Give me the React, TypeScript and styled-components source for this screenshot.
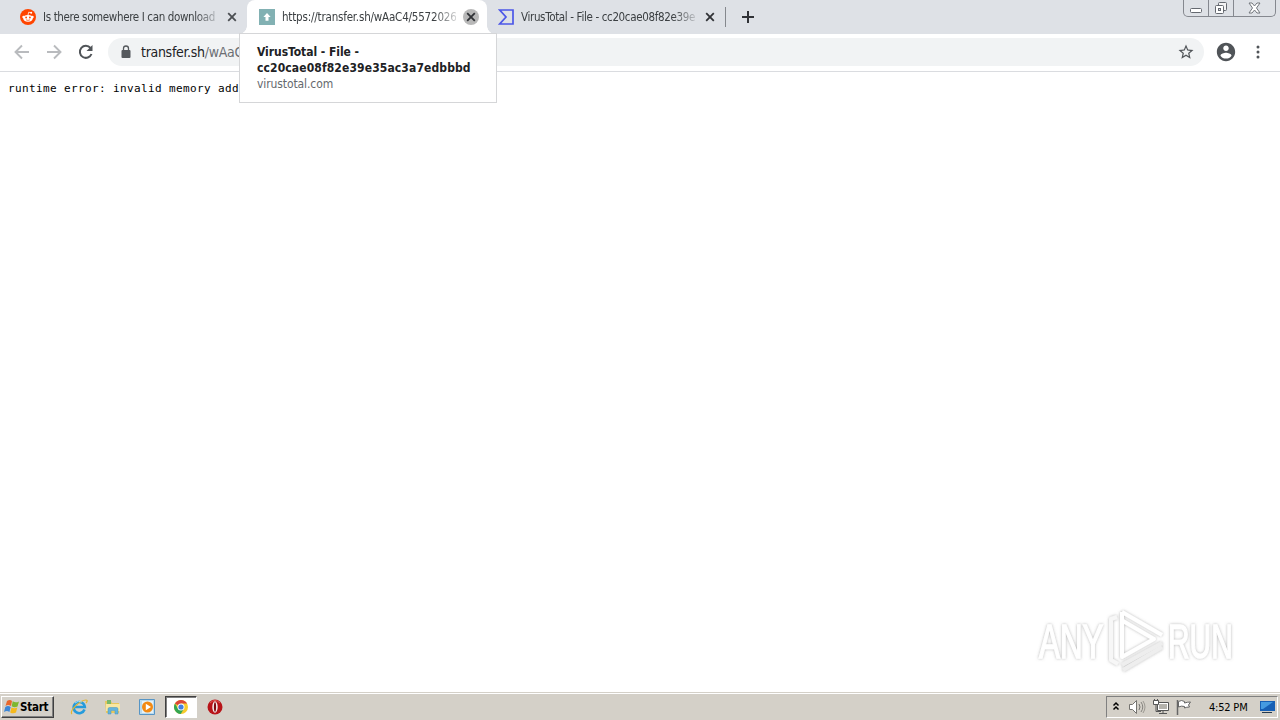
import React from 'react';
import styled, { createGlobalStyle } from 'styled-components';

const GlobalStyle = createGlobalStyle`
  * {
    box-sizing: border-box;
  }

  body {
    margin: 0;
    overflow: hidden;
    background: #fff;
    font-family: "DejaVu Sans Condensed", "DejaVu Sans", sans-serif;
    font-stretch: condensed;
  }

  svg {
    display: block;
    flex: none;
  }
`;

interface LabelProps {
  $spacing?: number;
}

const Desktop = styled.div`
  display: flex;
  flex-direction: column;
  width: 1280px;
  height: 720px;
  position: relative;
`;

// Tab strip
const TabStrip = styled.div`
  display: flex;
  height: 34px;
  flex: none;
  background: #dee1e6;
  padding-left: 8px;
`;

const Tab = styled.div<{ $active?: boolean; $width: number; $inset?: number }>`
  display: flex;
  align-items: center;
  position: relative;
  width: ${props => props.$width}px;
  height: 34px;
  padding-left: ${props => props.$inset || 12}px;
  border-radius: 8px 8px 0 0;
  background: ${props => (props.$active ? '#fff' : 'transparent')};

  /* the active tab flares out where it meets the toolbar */
  &::before,
  &::after {
    content: "";
    display: ${props => (props.$active ? 'block' : 'none')};
    position: absolute;
    bottom: 0;
    width: 8px;
    height: 8px;
  }

  &::before {
    left: -8px;
    background: radial-gradient(circle at 0 0, transparent 7.5px, #fff 8px);
  }

  &::after {
    right: -8px;
    background: radial-gradient(circle at 100% 0, transparent 7.5px, #fff 8px);
  }
`;

const TabTitle = styled.span<LabelProps>`
  width: 174px;
  margin-left: 7px;
  overflow: hidden;
  white-space: nowrap;
  font-size: 11.5px;
  letter-spacing: ${props => props.$spacing || 0}px;
  line-height: 16px;
  color: #3c4043;
  mask-image: linear-gradient(to right, #000 152px, transparent 180px);
`;

const TabClose = styled.div<{ $hovered?: boolean }>`
  display: flex;
  align-items: center;
  justify-content: center;
  width: 16px;
  height: 16px;
  margin-left: 7px;
  border-radius: 50%;
  background: ${props => (props.$hovered ? '#b8b8b8' : 'transparent')};
`;

const NewTab = styled.div`
  display: flex;
  align-items: center;
  height: 20px;
  margin-top: 7px;
  padding-left: 15px;
  border-left: 1px solid #85888d;
`;

const WindowButtons = styled.div`
  display: flex;
  width: 93px;
  height: 17px;
  margin-left: auto;
  margin-right: 4px;
  border: 1px solid #85888f;
  border-top: 0;
  border-radius: 0 0 5px 5px;
`;

const WindowButton = styled.div<{ $width: number }>`
  display: flex;
  align-items: center;
  justify-content: center;
  width: ${props => props.$width}px;
  height: 16px;

  & + & {
    border-left: 1px solid #85888f;
  }
`;

// Toolbar
const Toolbar = styled.div`
  display: flex;
  align-items: center;
  height: 38px;
  flex: none;
  padding: 0 13px 1px 13px;
  border-bottom: 1px solid #dadce0;
  background: #fff;
`;

const NavIcon = styled.div`
  display: flex;
  width: 32px;
`;

const Omnibox = styled.div`
  display: flex;
  align-items: center;
  width: 1096px;
  height: 28px;
  margin-left: -1px;
  padding: 0 9px 0 12px;
  border-radius: 14px;
  background: #f1f3f4;
`;

const Address = styled.span`
  flex: 1;
  margin-left: 9px;
  font-size: 14px;
  letter-spacing: -0.3px;
  color: #202124;
`;

const AddressPath = styled.span`
  color: #6b6f73;
`;

const ProfileButton = styled.div`
  margin-left: 11px;
`;

const MenuButton = styled.div`
  margin-left: 12px;
`;

// Page
const Page = styled.main`
  flex: 1;
  padding: 9px 8px 8px;
  overflow: hidden;
`;

const ErrorText = styled.pre`
  margin: 0;
  width: 232px;
  font-family: "DejaVu Sans Mono", "Liberation Mono", monospace;
  font-size: 11px;
  letter-spacing: 0.378px;
  line-height: 16px;
  color: #000;
`;

const HoverCard = styled.div`
  position: absolute;
  top: 33px;
  left: 239px;
  width: 258px;
  height: 70px;
  padding: 10px 0 0 17px;
  border: 1px solid #d5d6d8;
  background: #fff;
  line-height: 16px;
  white-space: nowrap;
`;

const CardTitle = styled.div<LabelProps>`
  font-size: 12px;
  font-weight: bold;
  letter-spacing: ${props => props.$spacing || 0}px;
  color: #202124;
`;

const CardDomain = styled.div`
  font-size: 12px;
  letter-spacing: -0.1px;
  color: #65696d;
`;

const Watermark = styled.svg`
  position: absolute;
  left: 1020px;
  top: 595px;
`;

// Taskbar
const Taskbar = styled.footer`
  display: flex;
  align-items: center;
  height: 28px;
  flex: none;
  padding: 1px 2px 0 1px;
  border-top: 1px solid #d4d0c8;
  box-shadow: inset 0 1px #fff;
  background: #d4d0c8;
`;

const StartButton = styled.div`
  display: flex;
  align-items: center;
  width: 53px;
  height: 22px;
  padding-left: 2px;
  border: 1px solid;
  border-color: #fff #404040 #404040 #fff;
  box-shadow: inset -1px -1px #808080;
  font-size: 11.5px;
  font-weight: bold;
  letter-spacing: -0.25px;
  color: #000;
`;

const QuickLaunch = styled.div`
  display: flex;
  align-items: center;
  margin-left: 8px;
`;

const TaskItem = styled.div<{ $active?: boolean }>`
  display: flex;
  align-items: center;
  justify-content: center;
  width: 34px;
  height: 22px;

  ${props =>
    props.$active &&
    `
    width: 32px;
    margin: 0 1px 0 1px;
    background: #fff;
    border: 1px solid;
    border-color: #404040 #fff #fff #404040;
    box-shadow: inset 1px 1px #808080;
  `}
`;

const Tray = styled.div`
  display: flex;
  align-items: center;
  width: 172px;
  height: 22px;
  margin-left: auto;
  padding-left: 5px;
  border: 1px solid;
  border-color: #808080 #fff #fff #808080;
`;

const TrayIcon = styled.div<{ $gap: number }>`
  margin-left: ${props => props.$gap}px;
`;

const Clock = styled.span`
  width: 43px;
  margin-left: 16px;
  white-space: nowrap;
  font-size: 11px;
  letter-spacing: -0.2px;
  color: #000;
`;

const CloseIcon = ({ dark }: { dark?: boolean }) => (
  <svg width="10" height="10" viewBox="0 0 10 10">
    <path d="M1.2 1.2l7.6 7.6M8.8 1.2L1.2 8.8" stroke={dark ? '#303236' : '#4b4e52'} strokeWidth="1.8" />
  </svg>
);

const RedditIcon = () => (
  <svg width="16" height="16" viewBox="0 0 16 16">
    <circle cx="8" cy="8" r="8" fill="#ff4500" />
    <path d="M8 6l.7-2.8 2.3.5" fill="none" stroke="#fff" strokeWidth=".8" />
    <circle cx="11.2" cy="3.8" r="1" fill="#fff" />
    <circle cx="3.5" cy="8" r="1.2" fill="#fff" />
    <circle cx="12.5" cy="8" r="1.2" fill="#fff" />
    <ellipse cx="8" cy="9.3" rx="4.7" ry="3.4" fill="#fff" />
    <circle cx="6.1" cy="8.5" r=".9" fill="#ff4500" />
    <circle cx="9.9" cy="8.5" r=".9" fill="#ff4500" />
    <path d="M6 10.8q2 1.2 4 0" fill="none" stroke="#ff4500" strokeWidth=".7" />
  </svg>
);

const TransferIcon = () => (
  <svg width="16" height="16" viewBox="0 0 16 16">
    <path d="M0 0h16v16H0z" fill="#82b1b3" />
    <path d="M8 4l3.6 4H9.5v3.8h-3V8H4.4z" fill="#fff" />
  </svg>
);

const VirusTotalIcon = () => (
  <svg width="16" height="16" viewBox="0 0 16 16">
    <path d="M1.7 1H15v14H1.7L8 8z" fill="none" stroke="#4c57e8" strokeWidth="1.7" />
  </svg>
);

const ChromeIcon = () => (
  <svg width="16" height="16" viewBox="0 0 16 16">
    <circle cx="8" cy="8" r="7" fill="#f7cb2d" />
    <path d="M8 8L1.94 4.5A7 7 0 0 1 14.06 4.5H8z" fill="#dc4638" />
    <path d="M1.94 4.5A7 7 0 0 0 7.7 15L11 9.7 8 8 5 9.7z" fill="#33a652" />
    <circle cx="8" cy="8" r="3.5" fill="#fff" />
    <circle cx="8" cy="8" r="2.6" fill="#427fe1" />
  </svg>
);

const Logo = () => (
  <Watermark width="230" height="90" viewBox="0 0 230 90">
    <defs>
      <linearGradient id="letters" gradientUnits="userSpaceOnUse" x1="0" y1="26" x2="0" y2="64">
        <stop offset="0" stopColor="#fff" />
        <stop offset=".49" stopColor="#fff" />
        <stop offset=".5" stopColor="#ebebeb" />
        <stop offset="1" stopColor="#f1f1f1" />
      </linearGradient>
      <filter id="soft" x="-10%" y="-10%" width="120%" height="120%">
        <feDropShadow dx="0" dy="0" stdDeviation="1.6" floodColor="#777" floodOpacity=".55" />
      </filter>
    </defs>
    <g
      filter="url(#soft)"
      fill="url(#letters)"
      stroke="url(#letters)"
      strokeWidth="1.4"
      fontFamily="Liberation Sans, sans-serif"
      fontSize="49"
    >
      <text transform="translate(19 62.5) scale(.64 1)">ANY</text>
      <text transform="translate(148 62.5) scale(.61 1)">RUN</text>
    </g>
    <g filter="url(#soft)" fill="none" strokeWidth="4" strokeLinejoin="round">
      <path d="M97 22L91 24V65L98 69" stroke="#f7f7f7" />
      <path d="M102 70L142 48" stroke="#eee" />
      <path d="M103 75L142 52" stroke="#eee" />
      <path d="M102 17V62L134 44 103 26" stroke="#fff" />
      <path d="M102 17L142 40" stroke="#fff" />
    </g>
  </Watermark>
);

const App = () => {
  return (
    <Desktop>
      <GlobalStyle />
      <TabStrip>
        <Tab $width={239}>
          <RedditIcon />
          <TabTitle $spacing={-0.36}>Is there somewhere I can download</TabTitle>
          <TabClose><CloseIcon /></TabClose>
        </Tab>
        <Tab $active $width={240}>
          <TransferIcon />
          <TabTitle $spacing={-0.19}>https://transfer.sh/wAaC4/5572026</TabTitle>
          <TabClose $hovered><CloseIcon dark /></TabClose>
        </Tab>
        <Tab $width={238} $inset={11}>
          <VirusTotalIcon />
          <TabTitle $spacing={-0.35}>VirusTotal - File - cc20cae08f82e39e</TabTitle>
          <TabClose><CloseIcon dark /></TabClose>
        </Tab>
        <NewTab>
          <svg width="14" height="14" viewBox="0 0 14 14">
            <path d="M7 1v12M1 7h12" stroke="#303236" strokeWidth="2" />
          </svg>
        </NewTab>
        <WindowButtons>
          <WindowButton $width={24}>
            <svg width="13" height="14" viewBox="0 0 13 14">
              <rect x=".5" y="7.5" width="11" height="4" rx="1" fill="#fff" stroke="#656970" />
            </svg>
          </WindowButton>
          <WindowButton $width={25}>
            <svg width="14" height="14" viewBox="0 0 14 14">
              <rect x="4.5" y="1.5" width="8" height="8" rx="1" fill="#f3f3f4" stroke="#656970" />
              <rect x="1.5" y="4.5" width="8" height="8" rx="1" fill="#fff" stroke="#656970" />
              <rect x="4.5" y="7.5" width="2" height="2" fill="#dee1e6" stroke="#656970" />
            </svg>
          </WindowButton>
          <WindowButton $width={42}>
            <svg width="13" height="12" viewBox="0 0 13 12">
              <path d="M1 1h3l2.5 3L9 1h3L8.5 6l3.5 5H9L6.5 8 4 11H1l3.500-5z" fill="#fff" stroke="#72767c" />
            </svg>
          </WindowButton>
        </WindowButtons>
      </TabStrip>

      <Toolbar>
        <NavIcon>
          <svg width="18" height="18" viewBox="0 0 18 18">
            <path d="M16 9H3M9 2.500L2.500 9 9 15.500" fill="none" stroke="#b9bbbe" strokeWidth="1.900" />
          </svg>
        </NavIcon>
        <NavIcon>
          <svg width="18" height="18" viewBox="0 0 18 18">
            <path d="M2 9h13M9 2.500L15.500 9 9 15.500" fill="none" stroke="#b9bbbe" strokeWidth="1.900" />
          </svg>
        </NavIcon>
        <NavIcon>
          <svg width="18" height="18" viewBox="0 0 18 18">
            <path d="M14.500 11A6 6 0 1 1 13.500 5" fill="none" stroke="#505458" strokeWidth="2" />
            <path d="M15.500 2v6H9.500z" fill="#505458" />
          </svg>
        </NavIcon>
        <Omnibox>
          <svg width="12" height="14" viewBox="0 0 12 14">
            <rect x="1.500" y="5" width="9" height="8" rx="1" fill="#55595d" />
            <path d="M3.500 5.500V3.500a2.500 2.500 0 0 1 5 0v2" fill="none" stroke="#55595d" strokeWidth="1.300" />
          </svg>
          <Address>transfer.sh<AddressPath>/wAaC4/</AddressPath></Address>
          <svg width="18" height="18" viewBox="0 0 24 24">
            <path
              d="M22 9.240l-7.190-.62L12 2 9.190 8.630 2 9.240l5.460 4.730L5.820 21 12 17.270 18.180 21l-1.630-7.030L22 9.240zM12 15.400l-3.760 2.270 1-4.280-3.320-2.880 4.380-.38L12 6.100l1.710 4.040 4.380.38-3.320 2.880 1 4.280L12 15.400z"
              fill="#505458"
            />
          </svg>
        </Omnibox>
        <ProfileButton>
          <svg width="22" height="22" viewBox="0 0 24 24">
            <path
              d="M12 2C6.480 2 2 6.480 2 12s4.480 10 10 10 10-4.480 10-10S17.520 2 12 2zm0 3c1.660 0 3 1.340 3 3s-1.340 3-3 3-3-1.340-3-3 1.340-3 3-3zm0 14.200c-2.500 0-4.710-1.280-6-3.220.03-1.990 4-3.080 6-3.080 1.990 0 5.970 1.090 6 3.080-1.290 1.940-3.500 3.220-6 3.220z"
              fill="#505458"
            />
          </svg>
        </ProfileButton>
        <MenuButton>
          <svg width="18" height="18" viewBox="0 0 18 18" fill="#505458">
            <circle cx="9" cy="4" r="1.5" />
            <circle cx="9" cy="9" r="1.5" />
            <circle cx="9" cy="14" r="1.5" />
          </svg>
        </MenuButton>
      </Toolbar>

      <Page>
        <ErrorText>runtime error: invalid memory add</ErrorText>
      </Page>

      <Taskbar>
        <StartButton>
          <svg width="16" height="16" viewBox="0 0 16 16">
            <path d="M3 2q3-2 5 0L7 7Q4 5 1.500 7z" fill="#e8672b" />
            <path d="M8.700 2.300q3 2 6.300.2L13.500 7.500q-3 1.500-5.800-.2z" fill="#7db72f" />
            <path d="M1.300 8Q4 6 6.700 8L5.400 13Q3 11 0 13z" fill="#3c86d6" />
            <path d="M7.500 8.400q3 1.500 5.800.1L12 13.600q-3 1.500-5.800-.2z" fill="#f6b91c" />
          </svg>
          Start
        </StartButton>
        <QuickLaunch>
          <TaskItem>
            <svg width="18" height="18" viewBox="0 0 18 18">
              <path d="M14.500 11.500A5.600 5.600 0 1 1 14.800 9H5" fill="none" stroke="#259bdc" strokeWidth="2.600" />
              <path d="M2 16C-1 13 10 2 16 2c2 0 1 2 0 3" fill="none" stroke="#e4b52b" strokeWidth="1.200" />
              <path d="M5 5q3-3 7-1" fill="none" stroke="#9bdcf7" strokeWidth="1" />
            </svg>
          </TaskItem>
          <TaskItem>
            <svg width="18" height="18" viewBox="0 0 18 18">
              <path d="M1 3h6l1 2h7v10H2z" fill="#e8c75c" />
              <path d="M3 2h4v4H3z" fill="#79b86a" />
              <path d="M2 6h14v7H2z" fill="#f8e7a2" />
              <path d="M4 16v-5q0-1.500 1.500-1.500h7Q14 9.500 14 11v5h-3v-3.500H7V16z" fill="#64b4dc" stroke="#4795bd" strokeWidth=".5" />
            </svg>
          </TaskItem>
          <TaskItem>
            <svg width="18" height="18" viewBox="0 0 18 18">
              <path d="M1.500 1.500h15v15h-15z" fill="#b9dbef" stroke="#5795c5" />
              <path d="M4 3h11v12H4z" fill="#e4f1f8" />
              <circle cx="9.500" cy="9" r="5.500" fill="#f28a13" />
              <path d="M7.800 5.800L13 9l-5.200 3.200z" fill="#fff" />
            </svg>
          </TaskItem>
          <TaskItem $active><ChromeIcon /></TaskItem>
          <TaskItem>
            <svg width="16" height="16" viewBox="0 0 16 16">
              <circle cx="8" cy="8" r="7.500" fill="#b81419" />
              <path d="M3 4Q8-1 13 4" fill="none" stroke="#e65a55" />
              <ellipse cx="8" cy="8" rx="2.700" ry="5.800" fill="#f5eeee" />
              <ellipse cx="8" cy="8" rx="1.100" ry="4.700" fill="#7e0b10" />
            </svg>
          </TaskItem>
        </QuickLaunch>
        <Tray>
          <svg width="8" height="12" viewBox="0 0 8 12">
            <path d="M1.500 4.500L4 2l2.500 2.500M1.500 8.500L4 6l2.500 2.500" fill="none" stroke="#000" strokeWidth="1.500" />
          </svg>
          <TrayIcon $gap={8}>
            <svg width="18" height="18" viewBox="0 0 18 18" fill="none" stroke="#74736f">
              <path d="M1.500 6.500h3l4-4v13l-4-4h-3z" fill="#fff" />
              <path d="M11 6q2 3 0 6" />
              <path d="M13 4q3.500 5 0 10" stroke="#85837e" />
              <path d="M15 3q4 6 0 12" stroke="#9c9992" />
            </svg>
          </TrayIcon>
          <TrayIcon $gap={6}>
            <svg width="18" height="18" viewBox="0 0 18 18" fill="none" stroke="#555">
              <path d="M5.500 4.500h11v8h-11z" fill="#fff" />
              <path d="M7 6h8v5H7z" fill="#b4b2ac" stroke="none" />
              <path d="M1.500 2.500h5v4h-5zM2.500 1v2M5.500 1v2" fill="#fff" />
              <path d="M4 7v6.500h5M7 15.500h8M11 13v2" />
            </svg>
          </TrayIcon>
          <TrayIcon $gap={5}>
            <svg width="18" height="18" viewBox="0 0 18 18" stroke="#666">
              <path d="M2.500 2v15" strokeWidth="1.500" />
              <path d="M3.500 3.500q3-2 6 0v1.500q3-1 6-1l-2 3 1 2q-3 0-5 1V8.500q-3-1-6 .5z" fill="#fff" />
            </svg>
          </TrayIcon>
          <Clock>4:52 PM</Clock>
          <TrayIcon $gap={7}>
            <svg width="17" height="16" viewBox="0 0 17 16">
              <path d="M1 2h15v10H1z" fill="#1760b5" />
              <path d="M2 3h12L4 10H2z" fill="#459be1" />
              <path d="M3 13h10v1H3z" fill="#24384e" />
            </svg>
          </TrayIcon>
        </Tray>
      </Taskbar>

      <Logo />

      <HoverCard>
        <CardTitle $spacing={-0.05}>VirusTotal - File -</CardTitle>
        <CardTitle $spacing={0.12}>cc20cae08f82e39e35ac3a7edbbbd</CardTitle>
        <CardDomain>virustotal.com</CardDomain>
      </HoverCard>
    </Desktop>
  );
};

export default App;
